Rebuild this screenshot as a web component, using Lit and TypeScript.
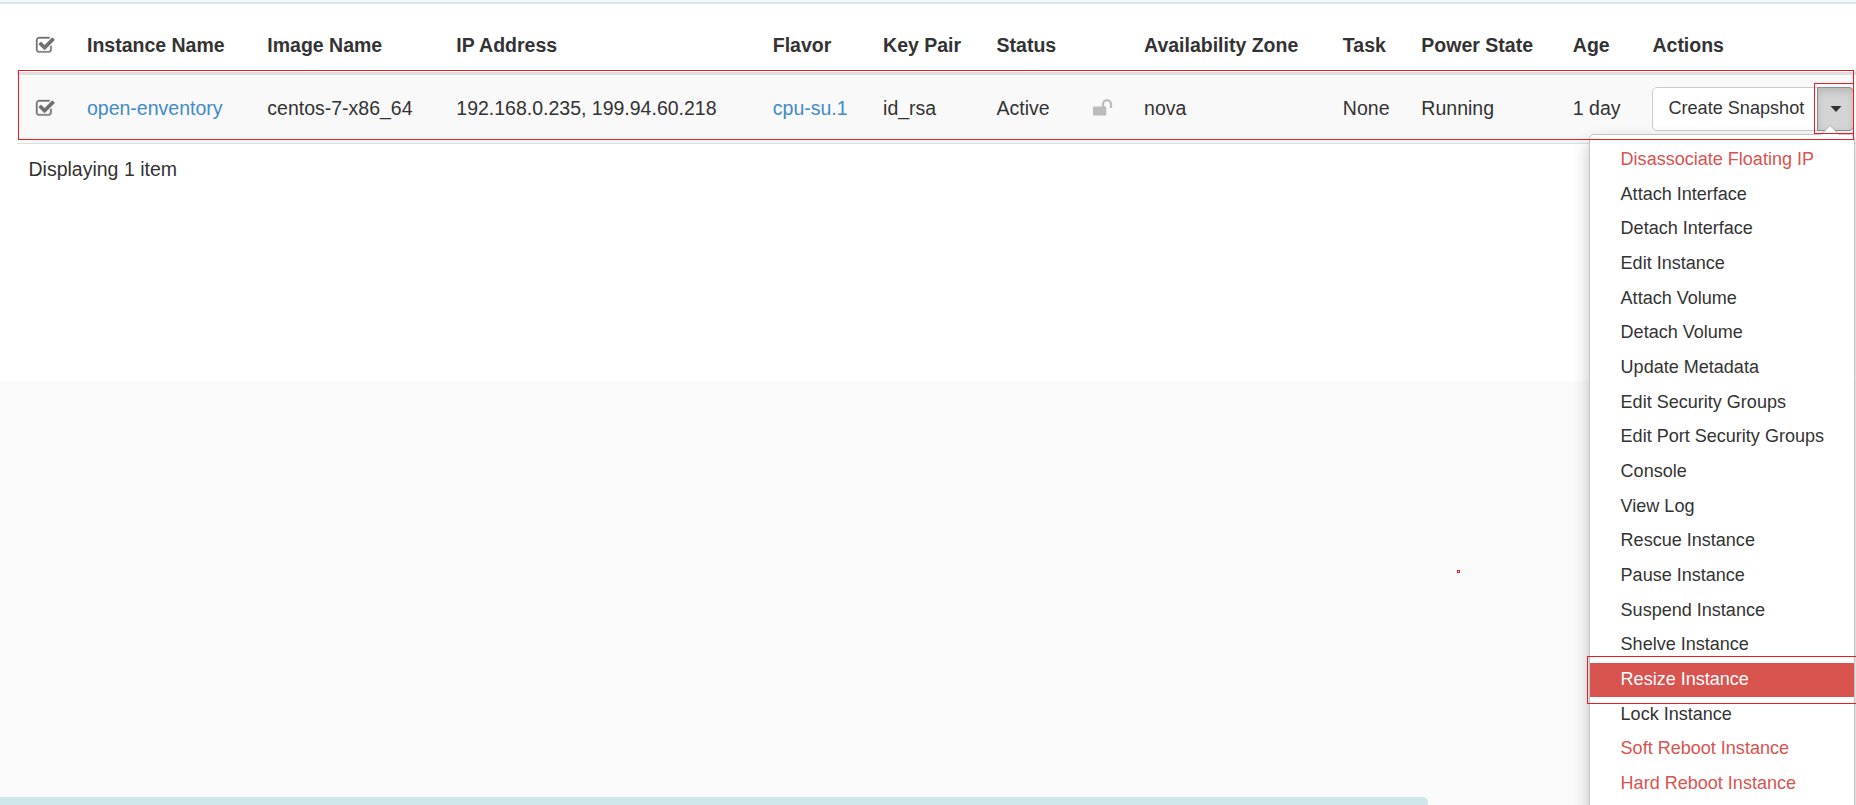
import { LitElement, html, css, svg } from "lit";
import { customElement } from "lit/decorators.js";

const actions: { label: string; kind?: string }[] = [
  { label: "Disassociate Floating IP", kind: "danger" },
  { label: "Attach Interface" },
  { label: "Detach Interface" },
  { label: "Edit Instance" },
  { label: "Attach Volume" },
  { label: "Detach Volume" },
  { label: "Update Metadata" },
  { label: "Edit Security Groups" },
  { label: "Edit Port Security Groups" },
  { label: "Console" },
  { label: "View Log" },
  { label: "Rescue Instance" },
  { label: "Pause Instance" },
  { label: "Suspend Instance" },
  { label: "Shelve Instance" },
  { label: "Resize Instance", kind: "active" },
  { label: "Lock Instance" },
  { label: "Soft Reboot Instance", kind: "danger" },
  { label: "Hard Reboot Instance", kind: "danger" },
];

const headers = ["Instance Name", "Image Name", "IP Address", "Flavor", "Key Pair", "Status", "", "Availability Zone", "Task", "Power State", "Age", "Actions"];

const checkIcon = html`<svg class="check" viewBox="0 0 1664 1536" width="19" height="17.5">
  ${svg`<path fill="#6f6f6f" stroke="#6f6f6f" stroke-width="30" d="M1408 802v318q0 119-84.500 203.500T1120 1408H288q-119 0-203.500-84.500T0 1120V288Q0 169 84.500 84.500T288 0h832q63 0 117 25 15 7 18 23 3 17-9 29l-49 49q-10 10-23 10-3 0-9-2-23-6-45-6H288q-66 0-113 47t-47 113v832q0 66 47 113t113 47h832q66 0 113-47t47-113V866q0-13 9-22l64-64q10-10 23-10 6 0 12 3 20 8 20 29zm231-489L825 1127q-24 24-57 24t-57-24L281 697q-24-24-24-57t24-57l110-110q24-24 57-24t57 24l263 263 647-647q24-24 57-24t57 24l110 110q24 24 24 57t-24 57z"/>`}
</svg>`;

@customElement("app-root")
export class AppRoot extends LitElement {
  static styles = css`
    :host { display: block; position: relative; width: 1856px; height: 805px; overflow: hidden; background: #fafafa; color: #333; font: 19.5px/28px "Liberation Sans", Arial, sans-serif; }
    .panel { height: 381px; background: #fff; }
    .bar { height: 2px; background: #f0f9f9; border-bottom: 2px solid #dbe5e5; }
    .table { margin-left: 17px; }
    .row { display: grid; align-items: center; white-space: nowrap; box-sizing: border-box;
      grid-template-columns: 51.400px 180.300px 189px 316.500px 110.300px 113.500px 96.200px 51.300px 198.800px 78.500px 151.500px 79.600px 203px; padding-left: 18.600px; }
    .head { height: 68px; padding-top: 13px; font-weight: bold; font-size: 19.500px; }
    .body { height: 72px; padding-bottom: 2px; background: #f9f9f9; border-top: 3px solid #ddd; border-bottom: 1px solid #ddd; }
    .check { display: block; overflow: visible; width: 18.500px; height: 17px; margin-top: 1px; }
    .body .check { margin-top: 0; }
    .link { color: #428bca; }
    .lock { display: block; margin-top: -1px; }
    .footer { padding: 11px 28.500px; }
    .group { display: flex; height: 44px; margin-top: 2px; }
    .btn { box-sizing: border-box; width: 166px; padding-left: 15px; background: #fff; border: 1px solid #ccc; border-radius: 5px 0 0 5px; font-size: 18.100px; line-height: 41px; }
    .toggle { box-sizing: border-box; width: 37px; margin-left: -1px; display: flex; align-items: center; justify-content: center; background: #d4d4d4; border: 1px solid #8c8c8c; border-radius: 0 5px 5px 0; box-shadow: inset 0 4px 7px rgba(0,0,0,.125); }
    .toggle svg { margin: 0 0 1px 1px; }
    .menu { position: absolute; left: 1589px; top: 134px; width: 264px; height: 700px; padding-top: 7px; background: #fff; border: 1px solid #c4c4c4; border-radius: 5px; box-shadow: 0 8px 17px rgba(0,0,0,.24); font-size: 18.050px; }
    .item { height: 34.680px; line-height: 34.660px; padding-left: 30.600px; }
    .danger { color: #d9534f; }
    .active { color: #fff; background: linear-gradient(transparent 1px, #d9534f 1px); }
    .arrow { position: absolute; left: 1820px; top: 124px; }
    .mark { position: absolute; box-sizing: border-box; border: 1px solid #ed1c24; }
    .m-row { left: 18px; top: 70px; width: 1836px; height: 70px; }
    .m-toggle { left: 1814px; top: 83px; width: 40px; height: 51px; }
    .m-item { left: 1587px; top: 656px; width: 275px; height: 48px; }
    .m-dot { left: 1457px; top: 570px; width: 3px; height: 3px; background: #fff; }
    .status { position: absolute; left: 0; bottom: 0; width: 1428px; height: 8px; background: #cfe7ea; border-radius: 0 5px 0 0; }
  `;

  render() {
    return html`
      <div class="panel">
        <div class="bar"></div>
        <div class="table">
          <div class="row head"><span>${checkIcon}</span>${headers.map((h) => html`<span>${h}</span>`)}</div>
          <div class="row body">
            <span>${checkIcon}</span>
            <span class="link">open-enventory</span>
            <span>centos-7-x86_64</span>
            <span>192.168.0.235, 199.94.60.218</span>
            <span class="link">cpu-su.1</span>
            <span>id_rsa</span>
            <span>Active</span>
            <svg class="lock" width="20" height="17" viewBox="0 0 20 17"><rect y="7.500" width="13.300" height="9" rx="1" fill="#bbb"/><path d="M10 8V5.200a4 4 0 0 1 8 0V9" fill="none" stroke="#bbb" stroke-width="2.300"/></svg>
            <span>nova</span>
            <span>None</span>
            <span>Running</span>
            <span>1 day</span>
            <div class="group">
              <div class="btn">Create Snapshot</div>
              <div class="toggle"><svg width="12" height="6" viewBox="0 0 12 6"><path d="M0.500 0h11L6 6z" fill="#333"/></svg></div>
            </div>
          </div>
        </div>
        <div class="footer">Displaying 1 item</div>
      </div>
      <div class="status"></div>
      <div class="menu">${actions.map((a) => html`<div class="item ${a.kind ?? ""}">${a.label}</div>`)}</div>
      <svg class="arrow" width="20" height="12" viewBox="0 0 20 12"><path d="M1 11L10 1.500L19 11V12H1z" fill="#fff"/><path d="M1 10.500L10 1.500L19 10.500" fill="none" stroke="#b4b4b4"/></svg>
      <div class="mark m-row"></div>
      <div class="mark m-toggle"></div>
      <div class="mark m-item"></div>
      <div class="mark m-dot"></div>
    `;
  }
}
